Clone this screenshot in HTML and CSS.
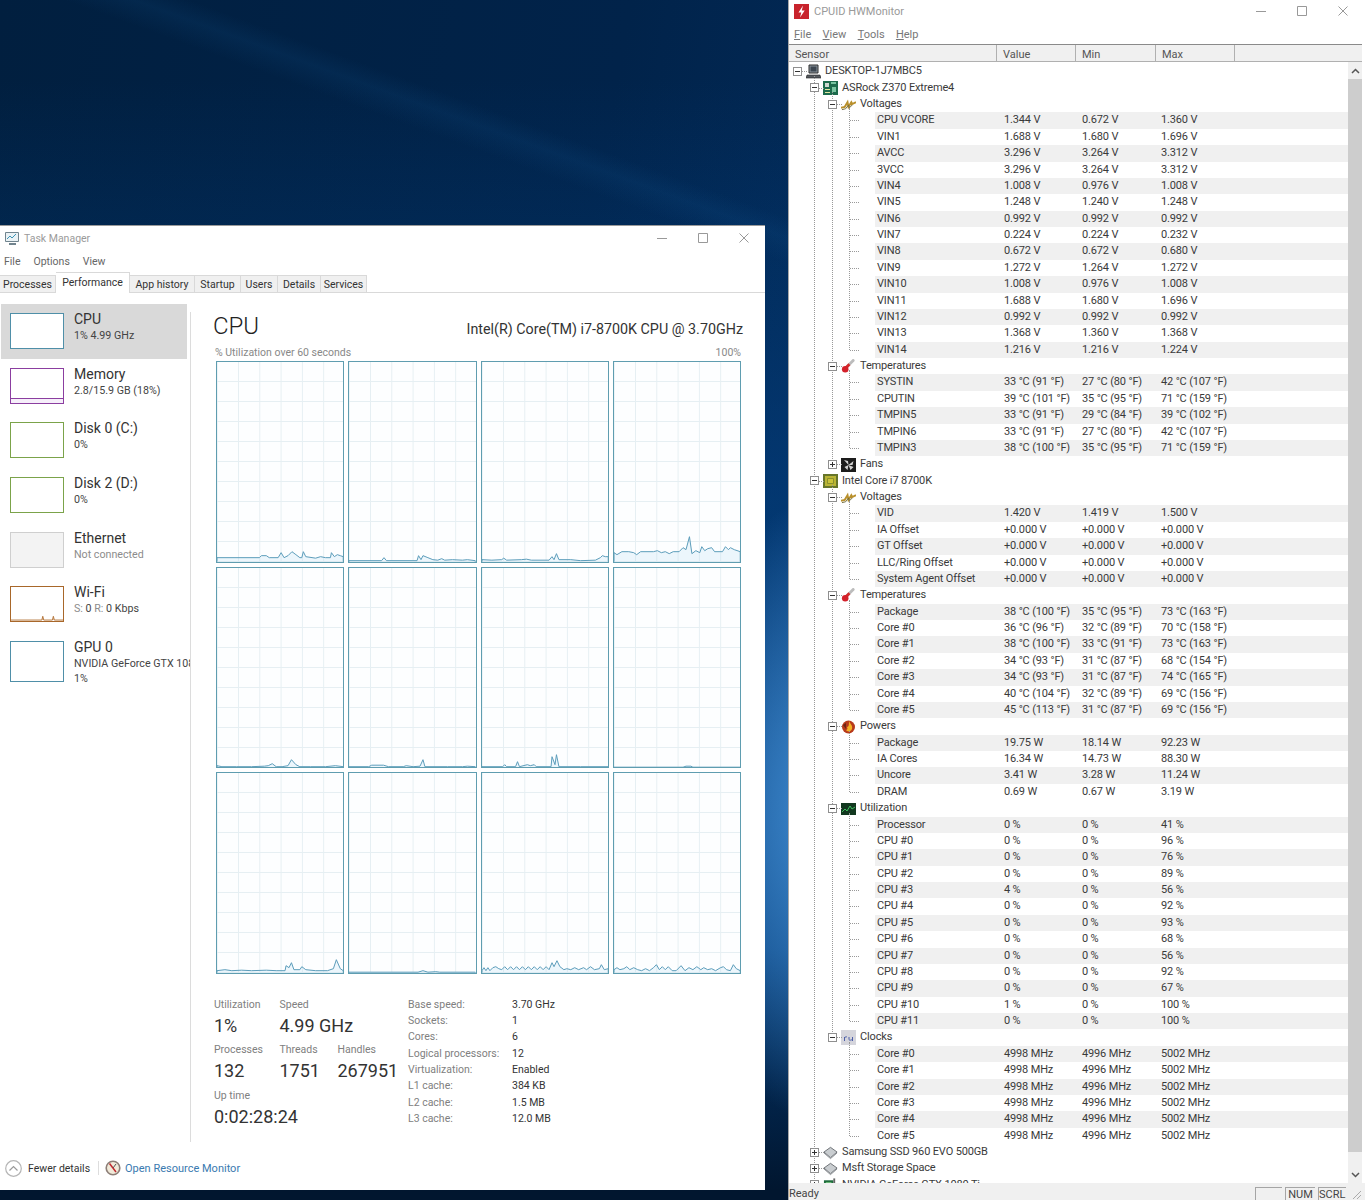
FILE: index.html
```html
<!DOCTYPE html>
<html lang="en">
<head>
    <meta charset="UTF-8">
    <meta name="viewport" content="width=device-width, initial-scale=1.0">
    <title>Task Manager and HWMonitor</title>
    <link rel="stylesheet" href="styles.css">
</head>
<body>
<svg class="sprite" width="0" height="0">
    <symbol id="ic-min" viewBox="0 0 10 10"><path d="M0 5.500h10" stroke="#999" fill="none"/></symbol>
    <symbol id="ic-max" viewBox="0 0 10 10"><path d="M.5.5h9v9h-9z" stroke="#999" fill="none"/></symbol>
    <symbol id="ic-close" viewBox="0 0 10 10"><path d="M.5.5l9 9M9.5.5l-9 9" stroke="#999" fill="none"/></symbol>
    <symbol id="ic-pc" viewBox="0 0 15 15"><path d="M3 1h9v8H3z" fill="#8a949c" stroke="#2c2c2c"/><path d="M4.500 2.500h6v5h-6z" fill="#3c4650"/><path d="M1 11h13l1 3H0z" fill="#55595e" stroke="#222" stroke-width=".6"/></symbol>
    <symbol id="ic-board" viewBox="0 0 15 15"><path d="M0 1h15v14H0z" fill="#1d6b4c"/><path d="M2 3h4v4H2z" fill="#cfd8d0"/><path d="M8 2h5v2H8zM9 7h4v5H9z" fill="#78c4a0"/><path d="M2 9h5v1H2zM2 12h5v1H2z" fill="#e0e8a0"/></symbol>
    <symbol id="ic-volt" viewBox="0 0 16 15"><path d="M0 11l4-1 3-5 1 5 3-5 1 2 4-2" stroke="#b9902c" stroke-width="2" fill="none"/><path d="M1 13l4-1 3-4 1 3 3-3" stroke="#6e6a3c" fill="none"/></symbol>
    <symbol id="ic-temp" viewBox="0 0 16 15"><path d="M5 9L13 1" stroke="#bcbcbc" stroke-width="3" stroke-linecap="round"/><path d="M5 9l4-4" stroke="#d52b2b" stroke-width="3"/><circle cx="4.500" cy="10.500" r="3.500" fill="#d3202a"/></symbol>
    <symbol id="ic-fan" viewBox="0 0 15 15"><path d="M0 1h15v14H0z" fill="#1c1c1c"/><path d="M7.500 8L3 3l4 1zM7.500 8l5-4-1 4zM7.500 8l-1 5-3-3zM7.500 8l5 2-3 3z" fill="#d4d4d4"/></symbol>
    <symbol id="ic-chip" viewBox="0 0 15 15"><path d="M0 1h15v14H0z" fill="#66752a"/><path d="M2 3h11v10H2z" fill="#b9b436"/><path d="M4.500 5.500h6v5h-6z" fill="#c9c23a" stroke="#8a8f2c"/></symbol>
    <symbol id="ic-power" viewBox="0 0 15 15"><circle cx="7.500" cy="8" r="6.500" fill="#b73a1c"/><path d="M8 2c1 3 4 4 3 8-1 3-5 3-6 1 1 0 2-1 1-3 2 0 2-3 2-6z" fill="#f4b126"/><path d="M2 6l3-2v6z" fill="#6e2614"/></symbol>
    <symbol id="ic-util" viewBox="0 0 15 15"><path d="M0 2h15v12H0z" fill="#12381f"/><path d="M1 11l3-3 2 2 3-5 2 3 3-2" stroke="#3fbf5f" fill="none"/></symbol>
    <symbol id="ic-clock" viewBox="0 0 15 15"><path d="M0 0h15v15H0z" fill="#d5d5dc"/><path d="M3.500 11V7M3.500 8c.5-1 1.500-1.500 2.500-1M8 7v2.500c0 1 2.500 1 3.500-.5M11.500 7v4" stroke="#4d5fa8" fill="none"/></symbol>
    <symbol id="ic-disk" viewBox="0 0 16 15"><path d="M8 2l7 5-7 6-7-6z" fill="#c9cdd0" stroke="#6b6f73"/><path d="M1 8l7 6 7-6" stroke="#8a8e92" fill="none"/></symbol>
    <symbol id="ic-gpu" viewBox="0 0 16 15"><path d="M1 3h10v10H1z" fill="#1e6b3c"/><path d="M11 1h2v5h-2z" fill="#666"/><path d="M3 5h6v5H3z" fill="#77c77f"/></symbol>
</svg>

<main class="desktop">

    <section class="window taskmgr">
        <div class="titlebar">
            <svg class="app-icon" width="16" height="16" viewBox="0 0 16 16"><path d="M1.500 2.500h13v9h-13z" fill="#eaf2f5" stroke="#71848e"/><path d="M3 9l3-3 2 2 4-4" stroke="#3c93b6" fill="none"/><path d="M5 14h7" stroke="#71848e" stroke-width="2"/></svg>
            <span class="title-text">Task Manager</span>
            <div class="win-controls">
                <svg><use href="#ic-min"/></svg>
                <svg><use href="#ic-max"/></svg>
                <svg><use href="#ic-close"/></svg>
            </div>
        </div>
        <nav class="tm-menu"><span>File</span><span>Options</span><span>View</span></nav>
        <div class="tabs">
            <span class="tab tab-processes">Processes</span>
            <span class="tab tab-performance active">Performance</span>
            <span class="tab tab-history">App history</span>
            <span class="tab tab-startup">Startup</span>
            <span class="tab tab-users">Users</span>
            <span class="tab tab-details">Details</span>
            <span class="tab tab-services">Services</span>
        </div>

        <div class="tm-body">
            <aside class="sidebar">
                <div class="perf-item selected">
                    <div class="thumb thumb-cpu"></div>
                    <div class="perf-text"><div class="perf-name">CPU</div><div class="perf-sub">1% 4.99 GHz</div></div>
                </div>
                <div class="perf-item">
                    <div class="thumb thumb-mem"></div>
                    <div class="perf-text"><div class="perf-name">Memory</div><div class="perf-sub">2.8/15.9 GB (18%)</div></div>
                </div>
                <div class="perf-item">
                    <div class="thumb thumb-disk"></div>
                    <div class="perf-text"><div class="perf-name">Disk 0 (C:)</div><div class="perf-sub">0%</div></div>
                </div>
                <div class="perf-item">
                    <div class="thumb thumb-disk"></div>
                    <div class="perf-text"><div class="perf-name">Disk 2 (D:)</div><div class="perf-sub">0%</div></div>
                </div>
                <div class="perf-item">
                    <div class="thumb thumb-eth"></div>
                    <div class="perf-text"><div class="perf-name">Ethernet</div><div class="perf-sub muted">Not connected</div></div>
                </div>
                <div class="perf-item">
                    <div class="thumb thumb-wifi">
                        <svg viewBox="0 0 54 36" preserveAspectRatio="none"><path d="M0 35h32l1-4 1 4h9l1-4 1 4h9" stroke="#b4753a" fill="#e8cdb0"/></svg>
                    </div>
                    <div class="perf-text"><div class="perf-name">Wi-Fi</div><div class="perf-sub"><span class="muted">S:</span> 0 <span class="muted">R:</span> 0 Kbps</div></div>
                </div>
                <div class="perf-item">
                    <div class="thumb thumb-gpu"></div>
                    <div class="perf-text"><div class="perf-name">GPU 0</div><div class="perf-sub">NVIDIA GeForce GTX 1080 Ti</div><div class="perf-sub">1%</div></div>
                </div>
            </aside>

            <div class="perf-main">
                <div class="perf-head">
                    <h1>CPU</h1>
                    <span class="cpu-model">Intel(R) Core(TM) i7-8700K CPU @ 3.70GHz</span>
                </div>
                <div class="graph-caption"><span>% Utilization over 60 seconds</span><span>100%</span></div>
                <div class="graphs">
                    <div class="graph"><svg viewBox="0 0 128 200" preserveAspectRatio="none"><polyline points="0,200 0,196 43,196 45,194 50,194 53,196 62,196 65,191 68,196 72,194 76,190 80,193 84,196 86,196 87.500,190 90,195 100,196.500 105,195 110,196 115,196 116,191 119,195 122,193 125,194 128,195 128,200"/></svg></div>
                    <div class="graph"><svg viewBox="0 0 128 200" preserveAspectRatio="none"><polyline points="0,200 0,199 33,199 35.500,196 38,199 69,199 70.500,194 73,198 75,194 80,196 85,198 90,198.500 94,197 97,198.500 105,198 115,198.500 120,198 128,199 128,200"/></svg></div>
                    <div class="graph"><svg viewBox="0 0 128 200" preserveAspectRatio="none"><polyline points="0,200 0,198 10,198.500 20,198 22,196.500 25,198.500 40,198 45,197.500 50,198.500 68,198.500 71,195 73,198 75.500,192 78,198 90,198 100,199 115,198.500 120,196 122,194 125,195 128,195 128,200"/></svg></div>
                    <div class="graph"><svg viewBox="0 0 128 200" preserveAspectRatio="none"><polyline points="0,200 0,191 3,193 8,190 15,190 20,191 23,193 27,190 40,190 44,189 48,191 52,190 56,192 60,190 66,190 70,186 73,188 76.500,175 79,192 83,189 87,191 89,185 92,189 95,187 99,186 102,190 110,190 113,185 116,188 118,186 122,188 128,190 128,200"/></svg></div>
                    <div class="graph"><svg viewBox="0 0 128 200" preserveAspectRatio="none"><polyline points="0,200 0,198 5,199 20,199 35,199 48,198.500 52,198 56,196 60,199 66,199 72,198 75.500,192 80,197 84,199 95,199 110,199 120,198 128,199 128,200"/></svg></div>
                    <div class="graph"><svg viewBox="0 0 128 200" preserveAspectRatio="none"><polyline points="0,200 0,199 20,199 23,197.500 35,197.500 40,199 55,199 58,198 65,199 72,198.500 75,192 77,199 100,199 115,199 120,198.500 128,199 128,200"/></svg></div>
                    <div class="graph"><svg viewBox="0 0 128 200" preserveAspectRatio="none"><polyline points="0,200 0,199 21,199 23,197 25,199 34,199 36,194 38,199 46,197 49,198 53,197 55,199 70,199 71,189 74,197 75.500,187 78,199 100,199 128,199 128,200"/></svg></div>
                    <div class="graph"><svg viewBox="0 0 128 200" preserveAspectRatio="none"><polyline points="0,200 0,199.500 70,199.500 73,198.500 78,198.500 80,199.500 128,199.500 128,200"/></svg></div>
                    <div class="graph"><svg viewBox="0 0 128 200" preserveAspectRatio="none"><polyline points="0,200 0,198 8,197 15,198 25,197.500 35,198 50,197.500 60,198 69,198 70,193 73,195 75.500,190 78,197 84,197 86,194 90,197 100,198 112,198 118,196 121,187 125,196 128,198 128,200"/></svg></div>
                    <div class="graph"><svg viewBox="0 0 128 200" preserveAspectRatio="none"><polyline points="0,200 0,199.500 70,199.500 75,198 80,199.500 88,199 92,199.500 128,199.500 128,200"/></svg></div>
                    <div class="graph"><svg viewBox="0 0 128 200" preserveAspectRatio="none"><polyline points="0,200 0,198 2,195 4,198 6,195 8,198 11,195 14,194 17,196 20,197 23,194 26,197 29,194 32,197 35,194 38,197 41,194 44,197 47,194 50,197 53,194 56,197 59,194 62,197 65,194 68,197 71,190 73,194 76,188 79,194 83,197 86,196 90,197 94,195 98,197 103,195 106,197 110,194 114,197 119,196 121,192 124,197 128,196 128,200"/></svg></div>
                    <div class="graph"><svg viewBox="0 0 128 200" preserveAspectRatio="none"><polyline points="0,200 0,197 3,195 6,197 10,196 13,194 16,197 20,195 24,197 28,198 32,196 36,198 40,195 43,192 46,197 49,194 52,197 55,194 59,198 63,198 68,193 72,198 76,195 80,197 84,194 88,197 91,195 95,197 99,196 103,198 108,195 111,194 114,197 118,198 121,192 124,196 128,198 128,200"/></svg></div>
                </div>

                <div class="stats">
                    <div class="stats-left">
                        <div class="stat-row">
                            <div class="stat stat-a"><div class="stat-label">Utilization</div><div class="stat-value">1%</div></div>
                            <div class="stat"><div class="stat-label">Speed</div><div class="stat-value">4.99 GHz</div></div>
                        </div>
                        <div class="stat-row">
                            <div class="stat stat-a"><div class="stat-label">Processes</div><div class="stat-value">132</div></div>
                            <div class="stat stat-b"><div class="stat-label">Threads</div><div class="stat-value">1751</div></div>
                            <div class="stat"><div class="stat-label">Handles</div><div class="stat-value">267951</div></div>
                        </div>
                        <div class="stat-row">
                            <div class="stat"><div class="stat-label">Up time</div><div class="stat-value">0:02:28:24</div></div>
                        </div>
                    </div>
                    <dl class="stats-right">
                        <dt>Base speed:</dt><dd>3.70 GHz</dd>
                        <dt>Sockets:</dt><dd>1</dd>
                        <dt>Cores:</dt><dd>6</dd>
                        <dt>Logical processors:</dt><dd>12</dd>
                        <dt>Virtualization:</dt><dd>Enabled</dd>
                        <dt>L1 cache:</dt><dd>384 KB</dd>
                        <dt>L2 cache:</dt><dd>1.5 MB</dd>
                        <dt>L3 cache:</dt><dd>12.0 MB</dd>
                    </dl>
                </div>
            </div>
        </div>

        <footer class="tm-footer">
            <svg width="17" height="17" viewBox="0 0 17 17"><circle cx="8.500" cy="8.500" r="7.800" fill="#fff" stroke="#b5b5b5" stroke-width="1.200"/><path d="M4.500 10.500l4-4 4 4" stroke="#9a9a9a" stroke-width="1.200" fill="none"/></svg>
            <span class="fewer">Fewer details</span>
            <span class="footer-sep"></span>
            <svg width="16" height="16" viewBox="0 0 16 16"><circle cx="8" cy="8" r="6.800" fill="#f1ead9" stroke="#8d7f78" stroke-width="1.600"/><path d="M4.500 3.500L11 12" stroke="#c0272d" stroke-width="1.500"/><path d="M8 8l3-4" stroke="#555"/></svg>
            <a class="res-link">Open Resource Monitor</a>
        </footer>
    </section>

    <section class="window hwmon">
        <div class="titlebar">
            <svg class="app-icon" width="15" height="15" viewBox="0 0 15 15"><path d="M0 0h15v15H0z" fill="#c8232c"/><path d="M9 1.500L4.500 8.500h2.800L6 13.500l4.700-7H7.800z" fill="#fff"/></svg>
            <span class="title-text">CPUID HWMonitor</span>
            <div class="win-controls">
                <svg><use href="#ic-min"/></svg>
                <svg><use href="#ic-max"/></svg>
                <svg><use href="#ic-close"/></svg>
            </div>
        </div>
        <nav class="hw-menu">
            <span><u>F</u>ile</span><span><u>V</u>iew</span><span><u>T</u>ools</span><span><u>H</u>elp</span>
        </nav>
        <div class="hw-header">
            <span class="col-sensor">Sensor</span>
            <span class="col-value">Value</span>
            <span class="col-min">Min</span>
            <span class="col-max">Max</span>
        </div>
        <div class="hw-body">
            <div class="tree">
                <div class="node lvl0"><i class="toggle"></i><svg class="node-icon"><use href="#ic-pc"/></svg>DESKTOP-1J7MBC5</div>
                <div class="devices">
                    <div class="node lvl1"><i class="toggle"></i><svg class="node-icon"><use href="#ic-board"/></svg>ASRock Z370 Extreme4</div>
                    <div class="categories">
                        <div class="node lvl2"><i class="toggle"></i><svg class="node-icon"><use href="#ic-volt"/></svg>Voltages</div>
                        <div class="leaves">
                            <div class="sensor"><span>CPU VCORE</span><span>1.344 V</span><span>0.672 V</span><span>1.360 V</span></div>
                            <div class="sensor"><span>VIN1</span><span>1.688 V</span><span>1.680 V</span><span>1.696 V</span></div>
                            <div class="sensor"><span>AVCC</span><span>3.296 V</span><span>3.264 V</span><span>3.312 V</span></div>
                            <div class="sensor"><span>3VCC</span><span>3.296 V</span><span>3.264 V</span><span>3.312 V</span></div>
                            <div class="sensor"><span>VIN4</span><span>1.008 V</span><span>0.976 V</span><span>1.008 V</span></div>
                            <div class="sensor"><span>VIN5</span><span>1.248 V</span><span>1.240 V</span><span>1.248 V</span></div>
                            <div class="sensor"><span>VIN6</span><span>0.992 V</span><span>0.992 V</span><span>0.992 V</span></div>
                            <div class="sensor"><span>VIN7</span><span>0.224 V</span><span>0.224 V</span><span>0.232 V</span></div>
                            <div class="sensor"><span>VIN8</span><span>0.672 V</span><span>0.672 V</span><span>0.680 V</span></div>
                            <div class="sensor"><span>VIN9</span><span>1.272 V</span><span>1.264 V</span><span>1.272 V</span></div>
                            <div class="sensor"><span>VIN10</span><span>1.008 V</span><span>0.976 V</span><span>1.008 V</span></div>
                            <div class="sensor"><span>VIN11</span><span>1.688 V</span><span>1.680 V</span><span>1.696 V</span></div>
                            <div class="sensor"><span>VIN12</span><span>0.992 V</span><span>0.992 V</span><span>0.992 V</span></div>
                            <div class="sensor"><span>VIN13</span><span>1.368 V</span><span>1.360 V</span><span>1.368 V</span></div>
                            <div class="sensor"><span>VIN14</span><span>1.216 V</span><span>1.216 V</span><span>1.224 V</span></div>
                        </div>
                        <div class="node lvl2"><i class="toggle"></i><svg class="node-icon"><use href="#ic-temp"/></svg>Temperatures</div>
                        <div class="leaves">
                            <div class="sensor"><span>SYSTIN</span><span>33 °C (91 °F)</span><span>27 °C (80 °F)</span><span>42 °C (107 °F)</span></div>
                            <div class="sensor"><span>CPUTIN</span><span>39 °C (101 °F)</span><span>35 °C (95 °F)</span><span>71 °C (159 °F)</span></div>
                            <div class="sensor"><span>TMPIN5</span><span>33 °C (91 °F)</span><span>29 °C (84 °F)</span><span>39 °C (102 °F)</span></div>
                            <div class="sensor"><span>TMPIN6</span><span>33 °C (91 °F)</span><span>27 °C (80 °F)</span><span>42 °C (107 °F)</span></div>
                            <div class="sensor"><span>TMPIN3</span><span>38 °C (100 °F)</span><span>35 °C (95 °F)</span><span>71 °C (159 °F)</span></div>
                        </div>
                        <div class="node lvl2"><i class="toggle closed"></i><svg class="node-icon"><use href="#ic-fan"/></svg>Fans</div>
                    </div>
                    <div class="node lvl1"><i class="toggle"></i><svg class="node-icon"><use href="#ic-chip"/></svg>Intel Core i7 8700K</div>
                    <div class="categories long-tail">
                        <div class="node lvl2"><i class="toggle"></i><svg class="node-icon"><use href="#ic-volt"/></svg>Voltages</div>
                        <div class="leaves">
                            <div class="sensor"><span>VID</span><span>1.420 V</span><span>1.419 V</span><span>1.500 V</span></div>
                            <div class="sensor"><span>IA Offset</span><span>+0.000 V</span><span>+0.000 V</span><span>+0.000 V</span></div>
                            <div class="sensor"><span>GT Offset</span><span>+0.000 V</span><span>+0.000 V</span><span>+0.000 V</span></div>
                            <div class="sensor"><span>LLC/Ring Offset</span><span>+0.000 V</span><span>+0.000 V</span><span>+0.000 V</span></div>
                            <div class="sensor"><span>System Agent Offset</span><span>+0.000 V</span><span>+0.000 V</span><span>+0.000 V</span></div>
                        </div>
                        <div class="node lvl2"><i class="toggle"></i><svg class="node-icon"><use href="#ic-temp"/></svg>Temperatures</div>
                        <div class="leaves">
                            <div class="sensor"><span>Package</span><span>38 °C (100 °F)</span><span>35 °C (95 °F)</span><span>73 °C (163 °F)</span></div>
                            <div class="sensor"><span>Core #0</span><span>36 °C (96 °F)</span><span>32 °C (89 °F)</span><span>70 °C (158 °F)</span></div>
                            <div class="sensor"><span>Core #1</span><span>38 °C (100 °F)</span><span>33 °C (91 °F)</span><span>73 °C (163 °F)</span></div>
                            <div class="sensor"><span>Core #2</span><span>34 °C (93 °F)</span><span>31 °C (87 °F)</span><span>68 °C (154 °F)</span></div>
                            <div class="sensor"><span>Core #3</span><span>34 °C (93 °F)</span><span>31 °C (87 °F)</span><span>74 °C (165 °F)</span></div>
                            <div class="sensor"><span>Core #4</span><span>40 °C (104 °F)</span><span>32 °C (89 °F)</span><span>69 °C (156 °F)</span></div>
                            <div class="sensor"><span>Core #5</span><span>45 °C (113 °F)</span><span>31 °C (87 °F)</span><span>69 °C (156 °F)</span></div>
                        </div>
                        <div class="node lvl2"><i class="toggle"></i><svg class="node-icon"><use href="#ic-power"/></svg>Powers</div>
                        <div class="leaves">
                            <div class="sensor"><span>Package</span><span>19.75 W</span><span>18.14 W</span><span>92.23 W</span></div>
                            <div class="sensor"><span>IA Cores</span><span>16.34 W</span><span>14.73 W</span><span>88.30 W</span></div>
                            <div class="sensor"><span>Uncore</span><span>3.41 W</span><span>3.28 W</span><span>11.24 W</span></div>
                            <div class="sensor"><span>DRAM</span><span>0.69 W</span><span>0.67 W</span><span>3.19 W</span></div>
                        </div>
                        <div class="node lvl2"><i class="toggle"></i><svg class="node-icon"><use href="#ic-util"/></svg>Utilization</div>
                        <div class="leaves">
                            <div class="sensor"><span>Processor</span><span>0 %</span><span>0 %</span><span>41 %</span></div>
                            <div class="sensor"><span>CPU #0</span><span>0 %</span><span>0 %</span><span>96 %</span></div>
                            <div class="sensor"><span>CPU #1</span><span>0 %</span><span>0 %</span><span>76 %</span></div>
                            <div class="sensor"><span>CPU #2</span><span>0 %</span><span>0 %</span><span>89 %</span></div>
                            <div class="sensor"><span>CPU #3</span><span>4 %</span><span>0 %</span><span>56 %</span></div>
                            <div class="sensor"><span>CPU #4</span><span>0 %</span><span>0 %</span><span>92 %</span></div>
                            <div class="sensor"><span>CPU #5</span><span>0 %</span><span>0 %</span><span>93 %</span></div>
                            <div class="sensor"><span>CPU #6</span><span>0 %</span><span>0 %</span><span>68 %</span></div>
                            <div class="sensor"><span>CPU #7</span><span>0 %</span><span>0 %</span><span>56 %</span></div>
                            <div class="sensor"><span>CPU #8</span><span>0 %</span><span>0 %</span><span>92 %</span></div>
                            <div class="sensor"><span>CPU #9</span><span>0 %</span><span>0 %</span><span>67 %</span></div>
                            <div class="sensor"><span>CPU #10</span><span>1 %</span><span>0 %</span><span>100 %</span></div>
                            <div class="sensor"><span>CPU #11</span><span>0 %</span><span>0 %</span><span>100 %</span></div>
                        </div>
                        <div class="node lvl2"><i class="toggle"></i><svg class="node-icon"><use href="#ic-clock"/></svg>Clocks</div>
                        <div class="leaves">
                            <div class="sensor"><span>Core #0</span><span>4998 MHz</span><span>4996 MHz</span><span>5002 MHz</span></div>
                            <div class="sensor"><span>Core #1</span><span>4998 MHz</span><span>4996 MHz</span><span>5002 MHz</span></div>
                            <div class="sensor"><span>Core #2</span><span>4998 MHz</span><span>4996 MHz</span><span>5002 MHz</span></div>
                            <div class="sensor"><span>Core #3</span><span>4998 MHz</span><span>4996 MHz</span><span>5002 MHz</span></div>
                            <div class="sensor"><span>Core #4</span><span>4998 MHz</span><span>4996 MHz</span><span>5002 MHz</span></div>
                            <div class="sensor"><span>Core #5</span><span>4998 MHz</span><span>4996 MHz</span><span>5002 MHz</span></div>
                        </div>
                    </div>
                    <div class="node lvl1"><i class="toggle closed"></i><svg class="node-icon"><use href="#ic-disk"/></svg>Samsung SSD 960 EVO 500GB</div>
                    <div class="node lvl1"><i class="toggle closed"></i><svg class="node-icon"><use href="#ic-disk"/></svg>Msft Storage Space</div>
                    <div class="node lvl1"><i class="toggle closed"></i><svg class="node-icon"><use href="#ic-gpu"/></svg>NVIDIA GeForce GTX 1080 Ti</div>
                </div>
            </div>
            <div class="scrollbar">
                <div class="scroll-btn"><svg width="9" height="6" viewBox="0 0 9 6"><path d="M1 5l3.500-3.500L8 5" stroke="#555" stroke-width="1.500" fill="none"/></svg></div>
                <div class="scroll-thumb"></div>
                <div class="scroll-btn"><svg width="9" height="6" viewBox="0 0 9 6"><path d="M1 1l3.500 3.500L8 1" stroke="#555" stroke-width="1.500" fill="none"/></svg></div>
            </div>
        </div>
        <div class="statusbar">
            <span class="status-text">Ready</span>
            <span class="pane pane-blank"></span>
            <span class="pane pane-num">NUM</span>
            <span class="pane">SCRL</span>
            <svg class="grip" width="12" height="12" viewBox="0 0 12 12"><path d="M11 3l-8 8M11 7l-4 4" stroke="#aaa" fill="none"/></svg>
        </div>
    </section>

</main>
</body>
</html>
```

FILE: styles.css
```css
* {
    box-sizing: border-box;
}

body {
    margin: 0;
    font-family: Roboto, "Liberation Sans", sans-serif;
    color: #333;
    background: #01162f;
}

.sprite {
    position: absolute;
}

/* wallpaper, windows sit on it like on a real desktop */
.desktop {
    position: relative;
    width: 1365px;
    height: 1200px;
    overflow: hidden;
    background:
        radial-gradient(ellipse 240px 330px at 880px 810px, rgba(86, 170, 245, 0.95), rgba(86, 170, 245, 0) 100%),
        linear-gradient(200deg, rgba(20, 90, 150, 0) 402px, rgba(20, 90, 150, 0.14) 421px, rgba(20, 90, 150, 0) 445px),
        linear-gradient(180deg, rgba(4, 70, 140, 0) 80px, rgba(4, 70, 140, 0.5) 500px, rgba(4, 70, 140, 0.5) 950px, rgba(1, 22, 47, 1) 1190px),
        linear-gradient(100deg, #011f3f 0%, #01234a 40%, #022a58 58%, #033a72 100%);
}

.window {
    position: absolute;
    display: flex;
    flex-direction: column;
    background: #fff;
    overflow: hidden;
}

.taskmgr {
    left: 0;
    top: 225px;
    width: 765px;
    height: 965px;
    border-top: 1px solid #9a9a9a;
}

.hwmon {
    left: 788px;
    top: 0;
    width: 577px;
    height: 1200px;
    border-left: 1px solid #a8a8a8;
}

.titlebar {
    display: flex;
    align-items: center;
    flex: none;
}

.taskmgr .titlebar {
    height: 26px;
    padding: 0 0 2px 4px;
}

.hwmon .titlebar {
    height: 22px;
    padding-left: 5px;
}

.title-text {
    margin-left: 4px;
    font-size: 10.5px;
    color: #9a9a9a;
}

.hwmon .title-text {
    margin-left: 5px;
    font-size: 11px;
    letter-spacing: 0;
}

.win-controls {
    display: flex;
    gap: 31px;
    margin-left: auto;
    margin-right: 16px;
}

.hwmon .win-controls {
    margin-right: 17px;
}

.win-controls svg {
    width: 10px;
    height: 10px;
}

/* task manager */
.tm-menu {
    display: flex;
    gap: 13px;
    flex: none;
    height: 18px;
    padding: 1px 0 0 4px;
    font-size: 10.5px;
    line-height: 18px;
    color: #666;
}

.tabs {
    display: flex;
    flex: none;
    align-items: flex-end;
    height: 23px;
    border-bottom: 1px solid #d9d9d9;
    font-size: 10.5px;
}

.tab {
    height: 18px;
    margin-bottom: -1px;
    line-height: 18px;
    text-align: center;
    background: #f0f0f0;
    border: 1px solid #d9d9d9;
    border-left: 0;
}

.tab-processes { width: 56px; }
.tab-performance { width: 74px; }
.tab-history { width: 65px; }
.tab-startup { width: 46px; }
.tab-users { width: 37px; }
.tab-details { width: 43px; }
.tab-services { width: 46px; }

.tab.active {
    height: 21px;
    line-height: 19px;
    background: #fff;
    border-bottom: 0;
}

.tm-body {
    display: flex;
    flex: 1;
    min-height: 0;
}

.sidebar {
    position: relative;
    flex: none;
    width: 191px;
    padding: 11px 0 0 1px;
}

.sidebar::after {
    content: '';
    position: absolute;
    top: 19px;
    right: 0;
    bottom: 0;
    width: 1px;
    background: #dcdcdc;
}

.perf-item {
    display: flex;
    gap: 10px;
    width: 189px;
    height: 54.67px;
    padding: 9px 0 0 9px;
    overflow: hidden;
}

.perf-item.selected {
    width: 186px;
    background: #d9d9d9;
}

.thumb {
    flex: none;
    width: 54px;
    height: 36px;
    background: #fff;
    border: 1px solid #4f8fa8;
}

.thumb svg {
    display: block;
    width: 100%;
    height: 100%;
}

.thumb-mem {
    border-color: #8b3ea0;
    background: linear-gradient(to top, #f6effa 4px, #8b3ea0 4px, #8b3ea0 5px, #fff 5px);
}

.thumb-disk {
    border-color: #7ba34a;
}

.thumb-eth {
    background: #f3f3f3;
    border-color: #cfcfcf;
}

.thumb-wifi {
    border-color: #a8672a;
}

.thumb-gpu {
    height: 41px;
}

.perf-text {
    margin-top: -2px;
    white-space: nowrap;
}

.perf-name {
    font-size: 14px;
    line-height: 17px;
    color: #333;
}

.perf-sub {
    font-size: 10.7px;
    line-height: 15px;
    color: #444;
}

.muted {
    color: #8c8c8c;
}

.perf-main {
    flex: 1;
    min-width: 0;
    padding: 0 24px 0 23px;
}

.perf-head {
    display: flex;
    align-items: baseline;
    justify-content: space-between;
    height: 52px;
    padding-top: 18px;
    margin: 0 -2px 0 -1px;
}

.perf-head h1 {
    margin: 0;
    font-size: 24px;
    font-weight: 300;
    line-height: 30px;
    color: #222;
}

.cpu-model {
    font-size: 14.3px;
    color: #333;
}

.graph-caption {
    display: flex;
    justify-content: space-between;
    margin: 1px 0 1px 1px;
    font-size: 10.5px;
    line-height: 14px;
    color: #888;
}

.graphs {
    display: grid;
    grid-template-columns: repeat(4, 1fr);
    grid-template-rows: repeat(3, 1fr);
    gap: 4px;
    height: 613px;
    margin-left: 2px;
}

.graph {
    background-color: #fdfeff;
    background-image:
        linear-gradient(#e6eff3 1px, transparent 1px),
        linear-gradient(90deg, #e6eff3 1px, transparent 1px);
    background-size: 100% 20px, 21.3px 100%;
    background-position: 0 19px, 21px 0;
    border: 1.5px solid #5f9db0;
    min-width: 0;
}

.graph svg {
    display: block;
    width: 100%;
    height: 100%;
}

.graph polyline {
    fill: rgba(170, 215, 238, 0.2);
    stroke: #5c9dbb;
    stroke-width: 1;
    vector-effect: non-scaling-stroke;
}

.stats {
    display: flex;
    margin-top: 22.5px;
}

.stats-left {
    flex: none;
    width: 194px;
}

.stat-row {
    display: flex;
    margin-bottom: 4.5px;
}

.stat-a {
    width: 65.5px;
}

.stat-b {
    width: 58px;
}

.stat-label {
    font-size: 10.5px;
    line-height: 16px;
    color: #808080;
}

.stat-value {
    font-size: 18px;
    line-height: 25px;
    color: #333;
    white-space: nowrap;
}

.stats-right {
    display: grid;
    grid-template-columns: 104px auto;
    grid-auto-rows: 16.4px;
    justify-content: start;
    margin: 0;
    font-size: 10.5px;
    line-height: 16.4px;
}

.stats-right dt {
    color: #808080;
}

.stats-right dd {
    margin: 0;
    color: #333;
}

.tm-footer {
    display: flex;
    flex: none;
    align-items: center;
    height: 48px;
    padding: 4px 0 0 5px;
    font-size: 10.5px;
}

.fewer {
    margin-left: 6px;
}

.footer-sep {
    width: 1px;
    height: 14px;
    margin: 0 6px 0 8px;
    background: #ddd;
}

.res-link {
    margin-left: 4px;
    font-size: 11px;
    color: #3a7ab0;
}

/* hwmonitor */
.hw-menu {
    display: flex;
    gap: 11.3px;
    flex: none;
    height: 22px;
    padding: 5px 0 0 5px;
    font-size: 11px;
    line-height: 16px;
    color: #777;
}

.hw-header {
    display: flex;
    flex: none;
    height: 18px;
    margin-right: 3px;
    background: #f0f0f0;
    border-top: 1px solid #8a8a8a;
    border-bottom: 1px solid #b0b0b0;
    font-size: 11px;
    line-height: 19px;
    color: #555;
}

.hw-header span {
    padding-left: 6px;
    border-right: 1px solid #b0b0b0;
}

.col-sensor { width: 208px; }
.col-value { width: 79px; }
.col-min { width: 80px; }
.col-max { width: 79px; }

.hw-body {
    display: flex;
    flex: 1;
    min-height: 0;
    margin-right: 3px;
}

.tree {
    flex: 1;
    min-width: 0;
    padding-top: 1.3px;
    overflow: hidden;
    font-size: 11px;
    letter-spacing: -0.15px;
    color: #3a3a3a;
}

.node {
    position: relative;
    display: flex;
    align-items: center;
    height: 16.38px;
    line-height: 16.38px;
    white-space: nowrap;
}

.lvl0 { padding-left: 4px; }
.lvl1 { padding-left: 21px; }
.lvl2 { padding-left: 39px; }

.toggle {
    position: relative;
    flex: none;
    width: 9px;
    height: 9px;
    margin-right: 4px;
    background: #fff;
    border: 1px solid #8f8f8f;
    z-index: 1;
}

.toggle::before {
    content: '';
    position: absolute;
    top: 3px;
    left: 1px;
    width: 5px;
    height: 1px;
    background: #333;
}

.toggle.closed::after {
    content: '';
    position: absolute;
    top: 1px;
    left: 3px;
    width: 1px;
    height: 5px;
    background: #333;
}

.node::before {
    content: '';
    position: absolute;
    top: 8px;
    width: 5px;
    border-top: 1px dotted #999;
}

.lvl0::before { left: 13px; }
.lvl1::before { left: 30px; }
.lvl2::before { left: 48px; }

.node-icon {
    flex: none;
    width: 15px;
    height: 15px;
    margin-right: 4px;
}

.devices,
.categories,
.leaves {
    position: relative;
}

.devices::before,
.categories::before,
.leaves::before {
    content: '';
    position: absolute;
    border-left: 1px dotted #999;
}

.devices::before {
    left: 25px;
    top: -4px;
    bottom: 0;
}

.categories::before {
    left: 43px;
    top: -4px;
    bottom: 8px;
}

/* last category is open, so its line stops at the category row */
.categories.long-tail::before {
    bottom: 106px;
}

.leaves::before {
    left: 60px;
    top: -4px;
    bottom: 8px;
}

.sensor {
    position: relative;
    display: grid;
    grid-template-columns: 127px 78px 79px 1fr;
    height: 16.38px;
    padding-left: 88px;
    line-height: 16.38px;
    white-space: nowrap;
}

.leaves .sensor:nth-child(odd) {
    background: linear-gradient(90deg, transparent 86px, #f0f0f0 86px);
}

.sensor::before {
    content: '';
    position: absolute;
    left: 61px;
    top: 8px;
    width: 9px;
    border-top: 1px dotted #999;
}

.scrollbar {
    display: flex;
    flex: none;
    flex-direction: column;
    width: 14px;
    background: #f0f0f0;
}

.scroll-btn {
    display: flex;
    flex: none;
    align-items: center;
    justify-content: center;
    height: 17px;
}

.scroll-thumb {
    flex: none;
    height: 1073px;
    background: #cdcdcd;
}

.scroll-thumb + .scroll-btn {
    margin-top: auto;
}

.statusbar {
    display: flex;
    flex: none;
    align-items: flex-end;
    gap: 3px;
    height: 17px;
    background: #f0f0f0;
    font-size: 11px;
    color: #444;
}

.status-text {
    margin-right: auto;
    line-height: 13px;
}

.pane {
    width: 27.5px;
    height: 13px;
    border-top: 1px solid #a5a5a5;
    border-left: 1px solid #a5a5a5;
    line-height: 13px;
    text-align: center;
}

.pane-blank {
    width: 27px;
}

.pane-num {
    width: 30px;
}

.grip {
    margin-left: 1.5px;
    margin-right: 3px;
}
```
